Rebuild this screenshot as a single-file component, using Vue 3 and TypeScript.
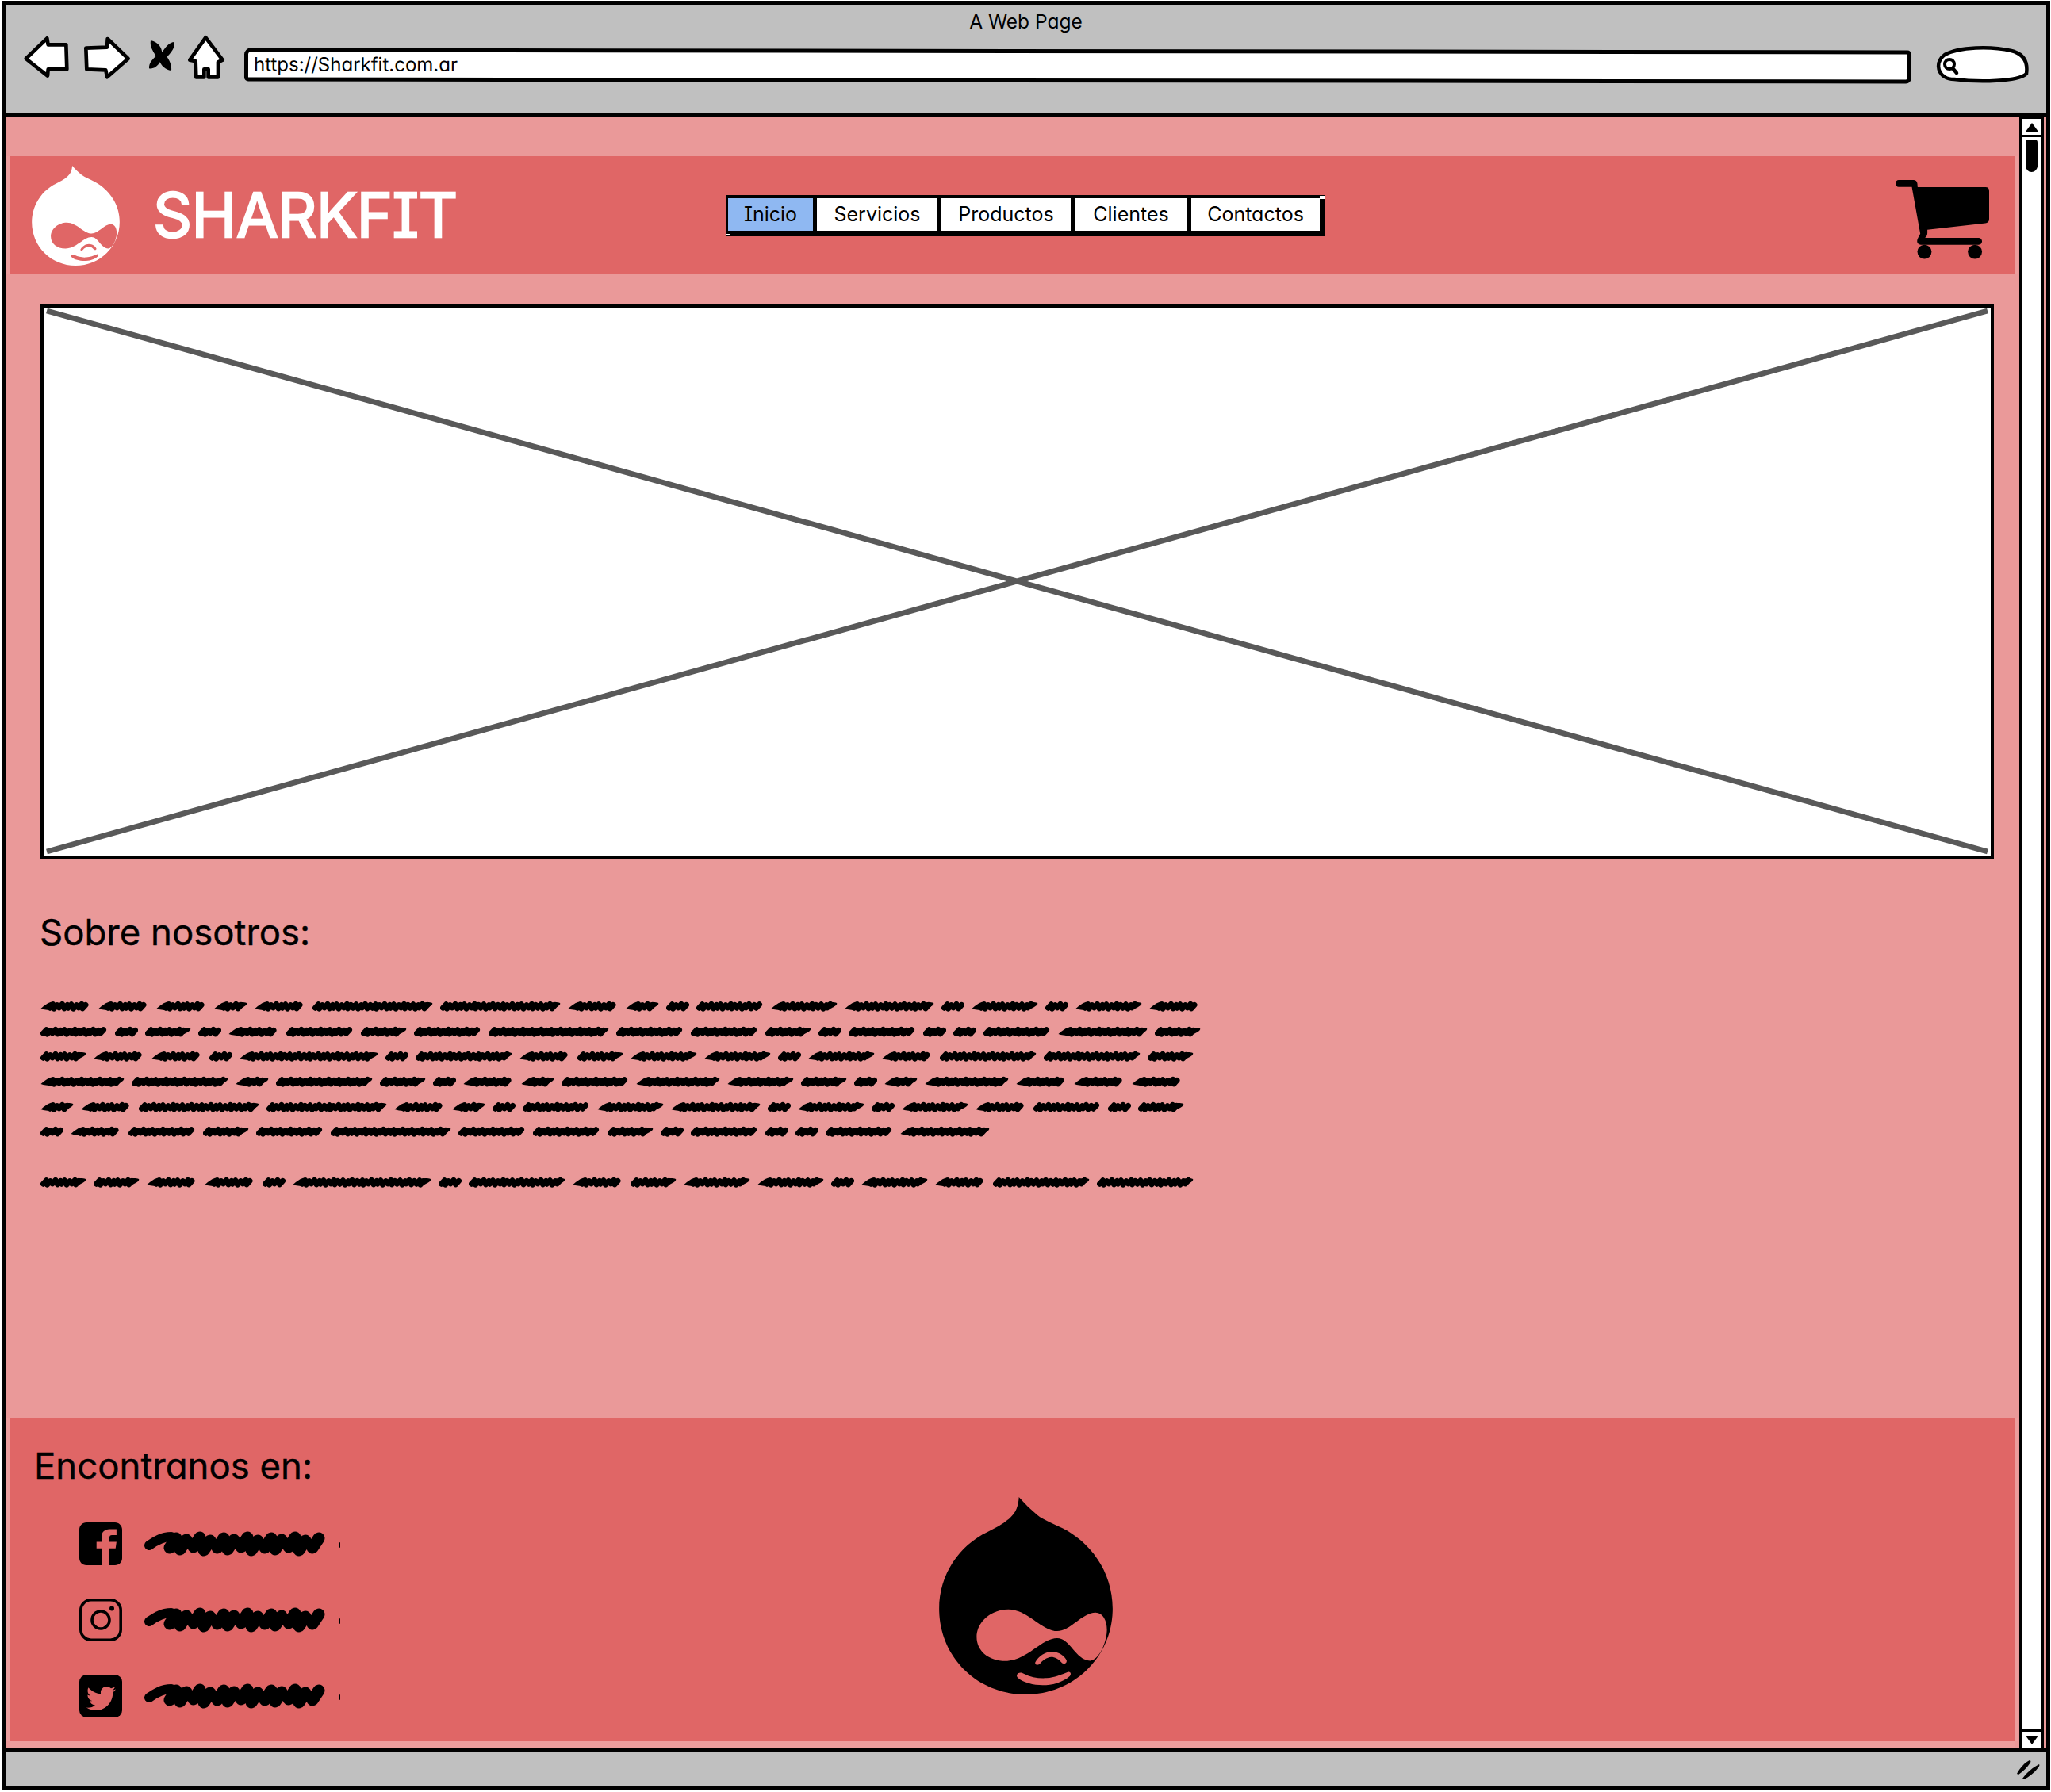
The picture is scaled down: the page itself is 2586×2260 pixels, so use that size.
<script setup lang="ts">
type Word = { w: number; lead: boolean; tail: boolean }
const kinds: Record<string, Word> = {
  A: { w: 64, lead: true, tail: false },
  B: { w: 42, lead: true, tail: true },
  C: { w: 29, lead: false, tail: false },
  D: { w: 85, lead: false, tail: false },
  E: { w: 152, lead: false, tail: true },
  F: { w: 58, lead: false, tail: true },
  G: { w: 84, lead: true, tail: true },
  H: { w: 122, lead: false, tail: true },
  I: { w: 113, lead: true, tail: true },
  J: { w: 175, lead: true, tail: true },
  K: { w: 106, lead: true, tail: true },
}
function lumps(w: number, lead: boolean, tail: boolean): string {
  const start = lead ? 12 : 3.5
  const end = tail ? w - 10 : w - 6
  let d = ''
  let x = start
  let i = 0
  while (x < end) {
    const off = [0, 0.9, -0.4, 0.6][i % 4]
    d += `M${x.toFixed(1)} ${(11.2 + off).toFixed(1)} L${(x + 4).toFixed(1)} ${(6.8 + off).toFixed(1)} `
    x += i % 3 === 0 ? 5 : 6.5
    i++
  }
  return d
}
function parse(s: string) {
  return s.split(' ').map((k) => {
    const t = kinds[k]
    return {
      w: t.w,
      lead: t.lead,
      tailD: t.tail
        ? `M${t.w - 14} 5 C${t.w - 9} 3.6 ${t.w - 4} 4 ${t.w - 1} 5 C${t.w + 0.5} 7 ${t.w - 4} 10.5 ${t.w - 14} 14 Z`
        : '',
      d: lumps(t.w, t.lead, t.tail),
      box: `0 0 ${t.w} 18`,
    }
  })
}
const rows = [
  'A A A B A E E A B C D G I C G C G A',
  'D C F C A D F D E D D F C D C C D I F',
  'F A A C J C H A F G G C G A H H F',
  'K H B H F C A B D K G F C B K A A A',
  'B A E E A B C D G I C G C G A D C F',
  'C A D F D E D D F C D C C D I',
]
const para = rows.map(parse)
const lastLine = parse('F F A A C J C H A F G G C G A H H')
const nav = ['Inicio', 'Servicios', 'Productos', 'Clientes', 'Contactos']

let bigD = ''
for (let x = 34, i = 0; x < 220; i++) {
  const off = [0, 2, -1, 3][i % 4]
  bigD += `M${x} ${23 + off} L${x + 8} ${11 + off} `
  x += i % 2 === 0 ? 13 : 17
}
const bigHatch = bigD
const bigBase = 'M8 20 C15 15 24 9 36 9'
const socials = ['facebook', 'instagram', 'twitter']
</script>

<template>
  <div class="browser">
    <header class="chrome">
      <div class="title">A Web Page</div>
      <div class="toolbar">
        <svg class="controls" width="290" height="90" viewBox="0 0 870 270">
          <path class="ctl" d="M38 135 L118 58 L122 82 L190 82 L193 175 L122 175 L120 200 Z" />
          <path class="ctl" d="M265 95 L345 92 L347 60 L425 135 L345 205 L340 178 L268 175 Z" />
          <path d="M510 66 C540 72 552 95 553 112 C565 92 580 72 600 72 C602 100 580 118 572 128 C585 148 590 165 588 180 C565 178 550 160 545 148 C535 165 520 175 504 172 C502 150 520 135 530 125 C518 105 506 90 510 66 Z" />
          <path class="ctl" d="M718 55 L782 140 L765 148 L765 205 L728 205 L728 175 L712 175 L712 205 L682 205 L680 145 L658 140 Z" />
        </svg>
        <div class="url"><span>https://Sharkfit.com.ar</span></div>
        <svg class="search" width="120" height="50" viewBox="0 0 120 50">
          <path d="M12 40 C2 34 1 20 12 12 C30 2 70 1 96 7 C112 11 117 22 115 36 C105 46 55 47 24 43 C18 43 15 42 12 40 Z" fill="#fff" stroke="#000" stroke-width="4.5" />
          <circle cx="18" cy="24" r="6" fill="none" stroke="#000" stroke-width="4" />
          <path d="M22 29 L27 35" stroke="#000" stroke-width="4.5" stroke-linecap="round" />
        </svg>
      </div>
    </header>

    <div class="viewport">
      <main class="page">
        <section class="band topband">
          <div class="brand">
            <svg class="drop white" width="111" height="126" viewBox="163 82 657 748">
              <path fill-rule="evenodd" d="M465 82 C463 115 455 140 430 162 C405 185 375 200 345 215 C240 265 163 375 163 505 C163 690 310 830 490 830 C675 830 820 685 820 505 C820 360 730 250 630 200 C595 182 560 170 535 150 C510 130 485 105 465 82 Z M305 612 C305 555 360 508 425 508 C500 508 550 590 610 590 C660 590 705 520 755 520 C785 520 800 555 798 590 C796 640 765 702 735 702 C680 702 660 617 610 617 C550 617 495 703 415 703 C350 703 305 665 305 612 Z M527 708 C540 685 565 668 590 668 C615 668 640 685 646 702 C646 715 632 716 626 708 C615 695 600 688 588 688 C570 690 555 700 546 712 C537 722 524 718 527 708 Z M462 750 C470 745 478 748 485 752 C510 765 540 770 570 768 C600 765 625 755 650 745 C660 742 665 752 658 760 C630 785 590 795 555 795 C520 795 480 785 462 768 C455 762 456 755 462 750 Z" />
            </svg>
            <h1 class="logo-text">SHARKFIT</h1>
          </div>
          <nav class="menu">
            <a v-for="(n, i) in nav" :key="n" :class="['item', 'i' + i]">{{ n }}</a>
          </nav>
          <svg class="cart" width="118" height="100" viewBox="420 680 356 301">
            <path d="M432 680 H488 C497 680 502 686 503 694 L504 707 H762 C772 707 776 712 776 722 V828 C776 838 770 843 762 844 L541 869 L541 882 C541 890 537 896 532 900 H736 C744 900 749 906 749 913 C749 921 744 926 736 926 H516 C507 926 502 920 502 913 C502 906 506 898 514 884 L482 706 H432 C425 706 420 700 420 693 C420 686 425 680 432 680 Z" />
            <circle cx="530" cy="953" r="27" />
            <circle cx="722" cy="953" r="27" />
          </svg>
        </section>

        <div class="hero">
          <svg width="100%" height="100%" viewBox="0 0 2455 691" preserveAspectRatio="none">
            <path d="M4 4 L2451 686 M4 686 L2451 4" stroke="#595959" stroke-width="7" fill="none" />
          </svg>
        </div>

        <section class="about">
          <h2 class="h-large">Sobre nosotros:</h2>
          <div class="scribble-block">
            <div v-for="(row, r) in para" :key="r" class="line">
              <svg v-for="(w, i) in row" :key="i" :width="w.w" height="18" :viewBox="w.box" class="word">
                <path v-if="w.lead" d="M0.5 12 C5 8 10 4 15 3.5 L15 14 C9 14 4 13.4 0.5 12 Z" />
                <path v-if="w.tailD" :d="w.tailD" />
                <path :d="w.d" class="stroke-lump" />
              </svg>
            </div>
            <div class="line spaced">
              <svg v-for="(w, i) in lastLine" :key="i" :width="w.w" height="18" :viewBox="w.box" class="word">
                <path v-if="w.lead" d="M0.5 12 C5 8 10 4 15 3.5 L15 14 C9 14 4 13.4 0.5 12 Z" />
                <path v-if="w.tailD" :d="w.tailD" />
                <path :d="w.d" class="stroke-lump" />
              </svg>
            </div>
          </div>
        </section>

        <section class="band footband">
          <div class="find">
            <h2 class="h-large">Encontranos en:</h2>
            <ul class="social">
              <li v-for="s in socials" :key="s">
                <svg v-if="s === 'facebook'" width="54" height="54" viewBox="0 0 54 54">
                  <path fill-rule="evenodd" d="M9 0 H45 C50 0 54 4 54 9 V45 C54 50 50 54 45 54 H38 V32.7 H45.7 L46.9 24.5 H38 V19 C38 17 39 16 41 16 H46.9 V8.5 H38 C32.5 8.5 28 12 28 18 V24.5 H21.7 V32.7 H28 V54 H9 C4 54 0 50 0 45 V9 C0 4 4 0 9 0 Z" />
                </svg>
                <svg v-else-if="s === 'instagram'" width="54" height="54" viewBox="0 0 54 54">
                  <rect x="1.8" y="1.8" width="50.4" height="50.4" rx="13" fill="none" stroke="#000" stroke-width="3.6" />
                  <circle cx="27" cy="27" r="11" fill="none" stroke="#000" stroke-width="3.6" />
                  <circle cx="41" cy="12.5" r="3" />
                </svg>
                <svg v-else width="54" height="54" viewBox="0 0 54 54">
                  <rect width="54" height="54" rx="9" />
                  <path transform="translate(9 11.5) scale(1.54)" fill="#e06666" d="M23.954 4.569c-.885.389-1.83.654-2.825.775 1.014-.611 1.794-1.574 2.163-2.723-.951.555-2.005.959-3.127 1.184-.896-.959-2.173-1.559-3.591-1.559-2.717 0-4.92 2.203-4.92 4.917 0 .39.045.765.127 1.124C7.691 8.094 4.066 6.13 1.64 3.161c-.427.722-.666 1.561-.666 2.475 0 1.71.87 3.213 2.188 4.096-.807-.026-1.566-.248-2.228-.616v.061c0 2.385 1.693 4.374 3.946 4.827-.413.111-.849.171-1.296.171-.314 0-.615-.03-.916-.086.631 1.953 2.445 3.377 4.604 3.417-1.68 1.319-3.809 2.105-6.102 2.105-.39 0-.779-.023-1.17-.067 2.189 1.394 4.768 2.209 7.557 2.209 9.054 0 13.999-7.496 13.999-13.986 0-.209 0-.42-.015-.63.961-.689 1.8-1.56 2.46-2.548l-.047-.02z" />
                </svg>
                <svg class="big" width="230" height="36" viewBox="0 0 230 36">
                  <path :d="bigBase" fill="none" stroke="#000" stroke-width="12" stroke-linecap="round" stroke-linejoin="round" />
                  <path :d="bigHatch" fill="none" stroke="#000" stroke-width="15" stroke-linecap="round" />
                </svg>
                <i class="tick"></i>
              </li>
            </ul>
          </div>
          <svg class="drop footer-drop" width="219" height="249" viewBox="163 82 657 748">
            <path fill-rule="evenodd" d="M465 82 C463 115 455 140 430 162 C405 185 375 200 345 215 C240 265 163 375 163 505 C163 690 310 830 490 830 C675 830 820 685 820 505 C820 360 730 250 630 200 C595 182 560 170 535 150 C510 130 485 105 465 82 Z M305 612 C305 555 360 508 425 508 C500 508 550 590 610 590 C660 590 705 520 755 520 C785 520 800 555 798 590 C796 640 765 702 735 702 C680 702 660 617 610 617 C550 617 495 703 415 703 C350 703 305 665 305 612 Z M527 708 C540 685 565 668 590 668 C615 668 640 685 646 702 C646 715 632 716 626 708 C615 695 600 688 588 688 C570 690 555 700 546 712 C537 722 524 718 527 708 Z M462 750 C470 745 478 748 485 752 C510 765 540 770 570 768 C600 765 625 755 650 745 C660 742 665 752 658 760 C630 785 590 795 555 795 C520 795 480 785 462 768 C455 762 456 755 462 750 Z" />
          </svg>
        </section>
      </main>

      <aside class="scrollbar">
        <div class="sb-btn up"><span class="tri-up"></span></div>
        <div class="sb-track"><div class="thumb"></div></div>
        <div class="sb-btn down"><span class="tri-down"></span></div>
      </aside>
    </div>

    <footer class="status">
      <svg width="32" height="26" viewBox="0 0 32 26">
        <path d="M2 19 C6 11 12 5 18 2 C19 2 20 3 19 5 C15 11 10 16 4 20 Z" />
        <path d="M9 25 C14 18 22 11 30 7 C31 8 30 10 29 11 C24 18 17 23 11 26 Z" />
      </svg>
    </footer>
  </div>
</template>

<style>
html, body { margin: 0; background: #fff; }
</style>

<style scoped>
.browser {
  box-sizing: border-box;
  width: 2583px;
  height: 2257px;
  margin: 1px 0 0 2px;
  border: 5px solid #000;
  display: flex;
  flex-direction: column;
  color: #000;
  font-family: Inter, "Noto Sans", sans-serif;
  font-feature-settings: "cv11", "cv08";
}
.chrome {
  box-sizing: border-box;
  height: 142px;
  flex: none;
  background: #c0c0c0;
  border-bottom: 5px solid #000;
}
.title {
  text-align: center;
  font-size: 24.5px;
  line-height: 28px;
  padding-top: 7px;
}
.toolbar {
  display: flex;
  align-items: flex-start;
  padding-left: 13px;
}
.controls { margin-top: -12px; flex: none; }
.ctl { fill: #fff; stroke: #000; stroke-width: 14; stroke-linejoin: round; }
.url {
  box-sizing: border-box;
  width: 2102px;
  height: 42px;
  margin: 21px 0 0 -2px;
  border: 5px solid #000;
  border-radius: 8px 5px 7px 5px;
  background: #fff;
  padding-left: 7px;
  font-size: 24px;
  line-height: 31px;
  transform: rotate(0.08deg);
  flex: none;
}
.search { margin: 16px 0 0 30px; flex: none; }

.viewport {
  flex: 1;
  min-height: 0;
  display: flex;
  background: #ea9999;
  border-bottom: 5px solid #000;
  padding-right: 3px;
}
.page {
  flex: 1;
  min-width: 0;
  display: flex;
  flex-direction: column;
  padding: 49px 6px 8px 5px;
}
.band {
  background: #e06666;
  box-shadow: -5px 0 0 #ec9d9d, 5px 0 0 #ec9d9d;
}
.topband {
  height: 149px;
  flex: none;
  display: grid;
  grid-template-columns: 903px 755px 1fr;
  align-items: center;
}
.brand {
  display: flex;
  align-items: center;
  padding-left: 28px;
  gap: 42px;
}
.white path { fill: #fff; }
.logo-text {
  margin: 0;
  color: #fff;
  font-size: 76.5px;
  font-weight: 400;
  line-height: 1;
  -webkit-text-stroke: 2.4px #fff;
  letter-spacing: -0.5px;
}
.menu {
  position: relative;
  display: flex;
  box-sizing: border-box;
  height: 52px;
  width: 755px;
  border: solid #000;
  border-width: 4px 6px 7px 3px;
  background: #000;
  gap: 5px;
}
.menu::before {
  content: "";
  position: absolute;
  right: -6px;
  top: -3px;
  width: 6px;
  height: 4px;
  background: #fff;
}
.menu::after {
  content: "";
  position: absolute;
  left: -3px;
  bottom: -6px;
  width: 6px;
  height: 2px;
  background: #fff;
}
.item {
  background: #fff;
  font-size: 25px;
  line-height: 40px;
  text-align: center;
}
.i0 { background: #8fb8f2; width: 107px; }
.i1 { width: 152px; }
.i2 { width: 163px; }
.i3 { width: 142px; }
.i4 { width: 162px; }
.cart { justify-self: end; margin-right: 32px; margin-top: 10px; }

.hero {
  box-sizing: border-box;
  flex: none;
  margin: 38px 0 0 39px;
  width: 2463px;
  height: 699px;
  border: 4px solid #000;
  background: #fff;
}
.hero svg { display: block; }

.about { padding-left: 38px; flex: none; }
.h-large {
  margin: 0;
  font-size: 45.5px;
  font-weight: 400;
  line-height: 54px;
  -webkit-text-stroke: 0.4px #000;
}
.about .h-large { margin-top: 66px; }
.scribble-block { margin: 50px 0 0 1px; }
.line {
  display: flex;
  gap: 9px;
  height: 31.7px;
  align-items: center;
}
.line.spaced { margin-top: 31.7px; }
.word { display: block; flex: none; }
.stroke-lump { fill: none; stroke: #000; stroke-width: 7; stroke-linecap: round; }

.footband {
  margin-top: auto;
  height: 408px;
  flex: none;
  display: flex;
  align-items: flex-start;
  box-shadow: -5px 0 0 #ec9d9d, 5px 0 0 #ec9d9d, 0 8px 0 #ec9d9d;
}
.find {
  width: 1172px;
  flex: none;
  box-sizing: border-box;
  padding: 34px 0 0 31px;
}
.social {
  list-style: none;
  margin: 44px 0 0 57px;
  padding: 0;
  display: flex;
  flex-direction: column;
  gap: 42px;
}
.social li {
  display: flex;
  align-items: center;
  height: 54px;
}
.social svg { display: block; flex: none; }
.big { margin-left: 26px; }
.tick { width: 2px; height: 7px; background: #000; margin-left: 17px; margin-top: 2px; border-radius: 1px; }
.footer-drop { margin-top: 100px; flex: none; }

.scrollbar {
  box-sizing: border-box;
  width: 31px;
  flex: none;
  border: solid #000;
  border-width: 2px 4px 0 4px;
  background: #fff;
  display: flex;
  flex-direction: column;
}
.sb-btn {
  flex: none;
  height: 20px;
  display: flex;
  align-items: center;
  justify-content: center;
}
.sb-btn.up { border-bottom: 3px solid #000; }
.sb-btn.down { border-top: 3px solid #000; }
.tri-up {
  width: 0; height: 0;
  border-left: 8px solid transparent;
  border-right: 8px solid transparent;
  border-bottom: 11px solid #000;
}
.tri-down {
  width: 0; height: 0;
  border-left: 8px solid transparent;
  border-right: 8px solid transparent;
  border-top: 11px solid #000;
}
.sb-track { flex: 1; padding: 3px 4px 0; }
.thumb { height: 41px; background: #000; border-radius: 4px 4px 8px 8px; }

.status {
  flex: none;
  height: 44px;
  background: #c0c0c0;
  display: flex;
  align-items: center;
  justify-content: flex-end;
  padding-right: 7px;
}
</style>
